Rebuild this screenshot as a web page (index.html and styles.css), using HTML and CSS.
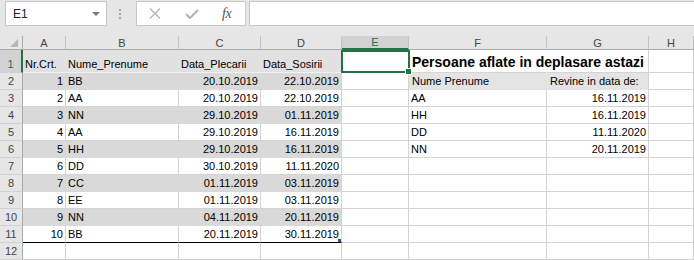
FILE: index.html
```html
<!DOCTYPE html>
<html>
<head>
<meta charset="utf-8">
<link rel="stylesheet" href="styles.css">
</head>
<body>
<div class="toolbar">
  <div class="namebox"><span class="ref">E1</span><span class="drop"></span></div>
  <div class="grip"><i></i><i></i><i></i></div>
  <div class="fxbox">
    <svg class="ico-x" width="12" height="11" viewBox="0 0 12 11"><path d="M1 0.5 L11 10.5 M11 0.5 L1 10.5" stroke="#b4b4b4" stroke-width="1.3" fill="none"/></svg>
    <svg class="ico-ok" width="14" height="10" viewBox="0 0 14 10"><path d="M1 5 L5 9 L13 1" stroke="#b4b4b4" stroke-width="2" fill="none"/></svg>
    <span class="fx">fx</span>
  </div>
  <div class="formula"></div>
</div>
<div class="sheet">
  <div class="row hdr">
    <div class="corner"><span class="tri"></span></div>
    <div class="ch">A</div><div class="ch">B</div><div class="ch">C</div><div class="ch">D</div>
    <div class="ch sel">E</div><div class="ch">F</div><div class="ch">G</div><div class="ch">H</div>
  </div>
  <div class="row r1">
    <div class="rh sel">1</div>
    <div class="c t">Nr.Crt.</div><div class="c t">Nume_Prenume</div><div class="c t">Data_Plecarii</div><div class="c t d">Data_Sosirii</div>
    <div class="c e"><div class="selbox"><span class="handle"></span></div></div>
    <div class="c title">Persoane aflate in deplasare astazi</div><div class="c"></div><div class="c"></div>
  </div>
  <div class="row g">
    <div class="rh">2</div>
    <div class="c t n">1</div><div class="c t">BB</div><div class="c t n">20.10.2019</div><div class="c t n d">22.10.2019</div>
    <div class="c"></div><div class="c sh sh1">Nume Prenume</div><div class="c sh">Revine in data de:</div><div class="c"></div>
  </div>
  <div class="row">
    <div class="rh">3</div>
    <div class="c n">2</div><div class="c">AA</div><div class="c n">20.10.2019</div><div class="c n">22.10.2019</div>
    <div class="c"></div><div class="c">AA</div><div class="c n">16.11.2019</div><div class="c"></div>
  </div>
  <div class="row g">
    <div class="rh">4</div>
    <div class="c t n">3</div><div class="c t">NN</div><div class="c t n">29.10.2019</div><div class="c t n d">01.11.2019</div>
    <div class="c"></div><div class="c">HH</div><div class="c n">16.11.2019</div><div class="c"></div>
  </div>
  <div class="row">
    <div class="rh">5</div>
    <div class="c n">4</div><div class="c">AA</div><div class="c n">29.10.2019</div><div class="c n">16.11.2019</div>
    <div class="c"></div><div class="c">DD</div><div class="c n">11.11.2020</div><div class="c"></div>
  </div>
  <div class="row g">
    <div class="rh">6</div>
    <div class="c t n">5</div><div class="c t">HH</div><div class="c t n">29.10.2019</div><div class="c t n d">16.11.2019</div>
    <div class="c"></div><div class="c">NN</div><div class="c n">20.11.2019</div><div class="c"></div>
  </div>
  <div class="row">
    <div class="rh">7</div>
    <div class="c n">6</div><div class="c">DD</div><div class="c n">30.10.2019</div><div class="c n">11.11.2020</div>
    <div class="c"></div><div class="c"></div><div class="c"></div><div class="c"></div>
  </div>
  <div class="row g">
    <div class="rh">8</div>
    <div class="c t n">7</div><div class="c t">CC</div><div class="c t n">01.11.2019</div><div class="c t n d">03.11.2019</div>
    <div class="c"></div><div class="c"></div><div class="c"></div><div class="c"></div>
  </div>
  <div class="row">
    <div class="rh">9</div>
    <div class="c n">8</div><div class="c">EE</div><div class="c n">01.11.2019</div><div class="c n">03.11.2019</div>
    <div class="c"></div><div class="c"></div><div class="c"></div><div class="c"></div>
  </div>
  <div class="row g">
    <div class="rh">10</div>
    <div class="c t n">9</div><div class="c t">NN</div><div class="c t n">04.11.2019</div><div class="c t n d">20.11.2019</div>
    <div class="c"></div><div class="c"></div><div class="c"></div><div class="c"></div>
  </div>
  <div class="row last">
    <div class="rh">11</div>
    <div class="c n">10</div><div class="c">BB</div><div class="c n">20.11.2019</div><div class="c n d end">30.11.2019</div>
    <div class="c"></div><div class="c"></div><div class="c"></div><div class="c"></div>
  </div>
  <div class="row">
    <div class="rh">12</div>
    <div class="c"></div><div class="c"></div><div class="c"></div><div class="c"></div>
    <div class="c"></div><div class="c"></div><div class="c"></div><div class="c"></div>
  </div>
</div>
</body>
</html>
```
FILE: styles.css
```css
html, body {
  margin: 0;
  padding: 0;
  background: #e6e6e6;
  font-family: "Liberation Sans", Arial, sans-serif;
  overflow: hidden;
}

.toolbar {
  height: 36px;
  display: flex;
  align-items: flex-start;
  padding-top: 1px;
  box-sizing: border-box;
}

.namebox {
  margin-left: 5px;
  width: 102px;
  height: 25px;
  box-sizing: border-box;
  background: #fff;
  border: 1px solid #c8c8c8;
  display: flex;
  align-items: center;
  justify-content: space-between;
  padding: 0 6px 0 7px;
}
.ref {
  font-size: 12px;
  color: #222;
}
.drop {
  width: 0;
  height: 0;
  border-left: 4px solid transparent;
  border-right: 4px solid transparent;
  border-top: 4px solid #7a7a7a;
}

.grip {
  width: 4px;
  margin: 8px 13px 0 12px;
  display: flex;
  flex-direction: column;
  gap: 2px;
}
.grip i {
  display: block;
  width: 2px;
  height: 2px;
  background: #a6a6a6;
}

.fxbox {
  width: 110px;
  height: 25px;
  box-sizing: border-box;
  background: #fff;
  border: 1px solid #c8c8c8;
  position: relative;
  display: flex;
  align-items: center;
  padding-left: 12px;
}
.ico-x { margin-right: 24px; }
.ico-ok { margin-right: 23px; }
.fx {
  font-family: "Liberation Serif", "Times New Roman", serif;
  font-style: italic;
  font-size: 14px;
  color: #555;
  letter-spacing: -0.5px;
}

.formula {
  margin-left: 3px;
  flex: 1;
  height: 25px;
  box-sizing: border-box;
  background: #fff;
  border: 1px solid #c8c8c8;
  border-right: none;
}

.sheet {
  display: grid;
  grid-template-columns: 23px 43px 113px 82px 81px 67px 138px 102px 1fr;
  grid-template-rows: 14px 23px repeat(11, 17px);
  background: #fff;
}
.row { display: contents; }

.corner, .ch {
  background: #e6e6e6;
  border-bottom: 1px solid #ababab;
  border-right: 1px solid #c3c3c3;
  box-sizing: border-box;
}
.corner {
  position: relative;
  border-right-color: #ababab;
}
.tri {
  position: absolute;
  right: 4px;
  bottom: 2px;
  width: 0;
  height: 0;
  border-left: 8px solid transparent;
  border-bottom: 8px solid #b8b8b8;
}
.ch {
  font-size: 11px;
  line-height: 14px;
  text-align: center;
  color: #444;
}
.ch.sel {
  background: #d2d2d2;
  color: #217346;
  border-bottom: 2px solid #217346;
  line-height: 13px;
}

.rh {
  background: #e6e6e6;
  border-right: 1px solid #ababab;
  border-bottom: 1px solid #d2d2d2;
  box-sizing: border-box;
  font-size: 11px;
  line-height: 16px;
  text-align: center;
  color: #444;
}
.r1 .rh { padding-top: 6px; }
.rh.sel {
  background: #d2d2d2;
  color: #217346;
  border-right: 2px solid #217346;
}

.c {
  box-sizing: border-box;
  border-right: 1px solid #d4d4d4;
  border-bottom: 1px solid #d4d4d4;
  font-size: 11px;
  line-height: 16px;
  padding: 0 2px;
  white-space: nowrap;
  overflow: hidden;
  color: #000;
  position: relative;
}
.c.n { text-align: right; }

.r1 .c { padding-top: 6px; }
.r1 .c.t {
  background: #e1e1e1;
  border-color: #e1e1e1;
  border-bottom-color: #f2f2f2;
}
.r1 .c.d { border-right-color: #d4d4d4; }

.g .c.t {
  background: #d9d9d9;
  border-color: #d9d9d9;
}
.g .c.d { border-right-color: #d4d4d4; }

.last .c.t, .last .c:nth-child(-n+5) {
  border-bottom-color: #000;
}
.end::after {
  content: "";
  position: absolute;
  right: 0;
  bottom: 0;
  width: 3px;
  height: 3px;
  background: #3b4f8f;
}

.r1 .c.title {
  font-weight: bold;
  font-size: 14px;
  line-height: 20px;
  padding: 2px 3px 0;
  overflow: visible;
  border-right-color: #fff;
  z-index: 1;
}

.c.sh {
  background: #e4e4e4;
  border-bottom-color: #e4e4e4;
  padding-left: 3px;
}
.c.sh1 { border-right-color: #e4e4e4; }

.c.e { overflow: visible; z-index: 2; }
.selbox {
  position: absolute;
  left: -1px;
  top: 0;
  width: 69px;
  height: 23px;
  border: 2px solid #217346;
  box-sizing: border-box;
}
.handle {
  position: absolute;
  right: -4px;
  bottom: -4px;
  width: 5px;
  height: 5px;
  background: #217346;
  border: 1px solid #fff;
}
```
